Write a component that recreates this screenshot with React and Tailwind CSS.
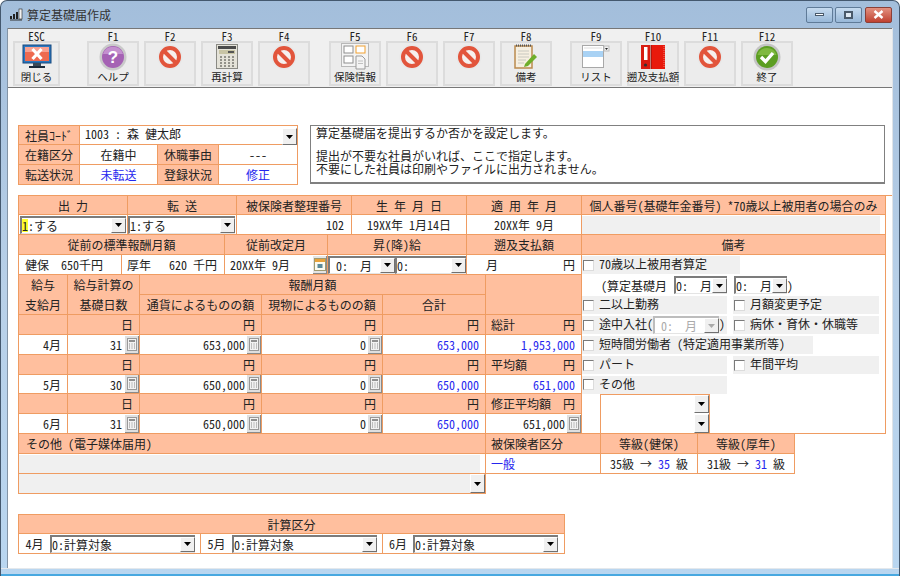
import React from "react";
import clsx from "clsx";
import { twMerge } from "tailwind-merge";

const cx = (...args) => twMerge(clsx(...args));

const font = "[font-family:'Noto_Sans_CJK_JP','Noto_Sans_CJK_SC',sans-serif] [font-feature-settings:'hwid'] text-[12px] leading-[13px] text-[#222222]";
const line = "border-r border-b border-[#ef9c62]";
const peach = "flex items-center justify-center bg-[#ffbf9e] border-r border-b border-[#ef9c62]";
const white = "flex items-center justify-center bg-white border-r border-b border-[#ef9c62]";
const blue = "text-[#2626ee]";

const NoEntry = () => (
  <svg width="26" height="26" viewBox="0 0 26 26">
    <circle cx="13" cy="13" r="12.5" fill="#e8e8e8" />
    <circle cx="13" cy="13" r="9" fill="#f6f0ee" stroke="#e2553c" strokeWidth="4" />
    <path d="M6.5 6.5 L19.5 19.5" stroke="#e2553c" strokeWidth="4" />
  </svg>
);

const Monitor = () => (
  <svg width="30" height="26" viewBox="0 0 30 26">
    <rect x="1" y="1" width="28" height="18" fill="#2a78c0" stroke="#17497e" />
    <rect x="3" y="3" width="24" height="14" fill="#ee6a50" />
    <rect x="3" y="3" width="24" height="5" fill="#f8a090" />
    <path d="M10.5 5 L19.5 15 M19.5 5 L10.5 15" stroke="#ffffff" strokeWidth="3.2" />
    <rect x="11" y="19" width="8" height="3" fill="#3a4a5a" />
    <rect x="7" y="22" width="16" height="2" fill="#1c2a3a" />
  </svg>
);

const Help = () => (
  <svg width="28" height="28" viewBox="0 0 28 28">
    <circle cx="14" cy="14" r="13.5" fill="#c9c9c9" />
    <circle cx="14" cy="14" r="11" fill="#a562b4" />
    <path d="M4 11 A10.5 10.5 0 0 1 24 11 Z" fill="#c490cf" />
    <text x="14" y="20" textAnchor="middle" fontSize="17" fontWeight="700" fill="#ffffff" fontFamily="Liberation Sans">?</text>
  </svg>
);

const Calculator = () => (
  <svg width="22" height="25" viewBox="0 0 22 25">
    <rect x="0.5" y="0.5" width="21" height="24" fill="#e4e2d8" stroke="#8a8a84" />
    <rect x="2" y="2" width="18" height="3" fill="#4a4a4a" />
    <rect x="3" y="6" width="16" height="4" fill="#c8c4a4" />
    <rect x="12" y="7" width="6" height="2" fill="#555555" />
    <path d="M4 13h2M8 13h2M12 13h2M16 13h2M4 16h2M8 16h2M12 16h2M16 16h2M4 19h2M8 19h2M12 19h2M16 19h2M4 22h2M8 22h2M12 22h2M16 22h2" stroke="#77776f" strokeWidth="1.6" />
  </svg>
);

const Insurance = () => (
  <svg width="28" height="27" viewBox="0 0 28 27">
    <rect x="0.5" y="0.5" width="27" height="23" fill="#f4f4f4" stroke="#b8b8b8" />
    <rect x="3" y="3" width="9" height="7" fill="#ffffff" stroke="#8e8e8e" />
    <rect x="15" y="3" width="9" height="7" fill="#ffffff" stroke="#f0a030" />
    <rect x="3" y="13" width="9" height="7" fill="#ffffff" stroke="#8e8e8e" />
    <path d="M15 13h6l3 3v10h-9z" fill="#f4f4f4" stroke="#9a9a9a" />
    <path d="M17 18h5M17 20.5h5" stroke="#c0c0c0" />
  </svg>
);

const Note = () => (
  <svg width="24" height="25" viewBox="0 0 24 25">
    <rect x="1" y="2" width="17" height="22" fill="#f6efe0" stroke="#bb8a4e" strokeWidth="1.5" />
    <path d="M2 1.5h15" stroke="#555555" strokeDasharray="1 1" strokeWidth="2" />
    <path d="M4 7h11M4 10h11M4 13h11M4 16h8M4 19h6" stroke="#c8c8c0" />
    <path d="M11 20 L20 10 L23 13 L14 22 L10 23 Z" fill="#6fae2a" />
  </svg>
);

const ListIcon = () => (
  <svg width="28" height="23" viewBox="0 0 28 23">
    <rect x="0.5" y="0.5" width="21" height="22" fill="#ffffff" stroke="#a8a8a8" />
    <rect x="1" y="6" width="20" height="6" fill="#a9d2f4" />
    <path d="M2 3h18" stroke="#dddddd" />
    <rect x="22" y="1" width="5" height="5" fill="#f2f2f2" stroke="#bbbbbb" />
    <path d="M23 3h3l-1.5 2z" fill="#222222" />
  </svg>
);

const Binder = () => (
  <svg width="24" height="24" viewBox="0 0 24 24">
    <rect x="0" y="0" width="9" height="24" fill="#d81c10" />
    <rect x="10" y="0" width="14" height="24" fill="#e8190c" />
    <path d="M10 0v24" stroke="#8a1008" />
    <rect x="3" y="2" width="3.5" height="13" fill="#ffffff" />
    <circle cx="4.5" cy="20" r="1.6" fill="#333333" />
    <path d="M23 1v22" stroke="#f08070" strokeDasharray="1 1" />
  </svg>
);

const Check = () => (
  <svg width="28" height="28" viewBox="0 0 28 28">
    <circle cx="14" cy="14" r="13.5" fill="#c4c4c4" />
    <circle cx="14" cy="14" r="11" fill="#5c9e22" />
    <path d="M4.5 12 A10 10 0 0 1 23.5 12 Z" fill="#7fb93f" />
    <path d="M8 14 L12.5 18.5 L20 10" fill="none" stroke="#ffffff" strokeWidth="3.4" />
  </svg>
);

const CalcBtn = () => (
  <span className="flex h-[18px] w-[14px] shrink-0 items-center justify-center border-r border-b border-r-[#8a8a8a] border-b-[#8a8a8a] bg-[#dfdfdf]">
    <svg width="10" height="13" viewBox="0 0 10 13">
      <rect x="0.5" y="0.5" width="9" height="12" fill="#f2f2f2" stroke="#999999" />
      <rect x="2" y="2" width="6" height="2" fill="#8f8f8f" />
      <path d="M2 6h1M4.5 6h1M7 6h1M2 8h1M4.5 8h1M7 8h1M2 10h1M4.5 10h1M7 10h1" stroke="#888888" />
    </svg>
  </span>
);

const Calendar = () => (
  <span className="flex h-[18px] w-[14px] shrink-0 items-center justify-center border-r border-b border-r-[#8a8a8a] border-b-[#8a8a8a] bg-[#e4e4e4]">
    <svg width="12" height="13" viewBox="0 0 12 13">
      <rect x="0.5" y="0.5" width="11" height="12" fill="#fbfbf2" stroke="#a09a70" />
      <rect x="1" y="1" width="10" height="3" fill="#e8a23c" />
      <rect x="3.5" y="6" width="5" height="4" fill="#5a8a9a" />
    </svg>
  </span>
);

const Arrow = ({ disabled, className }) => (
  <span
    className={cx(
      "flex w-[15px] shrink-0 items-center justify-center border-t border-l border-r border-b border-t-white border-l-white border-r-[#707070] border-b-[#707070] bg-[#f0f0f0]",
      className
    )}
  >
    <svg width="7" height="4" viewBox="0 0 7 4">
      <path d="M0 0h7L3.5 4z" fill={disabled ? "#aaaaaa" : "#000000"} />
    </svg>
  </span>
);

const Select = ({ value, cursor, disabled, className }) => (
  <div
    className={cx(
      "flex h-[18px] items-stretch border-t-2 border-l-2 border-b border-t-[#7c7c7c] border-l-[#7c7c7c] border-b-[#e4e4e4] bg-white",
      disabled && "text-[#aaaaaa] border-t-[#bdbdbd] border-l-[#bdbdbd]",
      className
    )}
  >
    <span className="flex min-w-0 flex-1 items-center whitespace-pre">
      {cursor ? <span className="bg-[#ffff30]">{cursor}</span> : null}
      {value}
    </span>
    <Arrow disabled={disabled} />
  </div>
);

const Checkbox = () => (
  <span className="mr-[5px] inline-block h-[11px] w-[11px] shrink-0 border border-t-[#7a7a7a] border-l-[#7a7a7a] border-r-[#dcdcdc] border-b-[#dcdcdc] bg-white" />
);

const Option = ({ label, className }) => (
  <div className={cx("flex h-[18px] items-center whitespace-pre bg-[#f0f0f0] pl-[1px]", className)}>
    <Checkbox />
    <span className="pb-[3px]">{label}</span>
  </div>
);

const tools = [
  { key: "ESC", label: "閉じる", icon: <Monitor />, cls: "w-[47px]" },
  { key: "F1", label: "ヘルプ", icon: <Help />, cls: "ml-[22px] w-[52px]" },
  { key: "F2", icon: <NoEntry />, cls: "w-[52px]" },
  { key: "F3", label: "再計算", icon: <Calculator />, cls: "w-[52px]" },
  { key: "F4", icon: <NoEntry />, cls: "w-[52px]" },
  { key: "F5", label: "保険情報", icon: <Insurance />, cls: "ml-[14px] w-[52px]" },
  { key: "F6", icon: <NoEntry />, cls: "w-[52px]" },
  { key: "F7", icon: <NoEntry />, cls: "w-[52px]" },
  { key: "F8", label: "備考", icon: <Note />, cls: "w-[52px]" },
  { key: "F9", label: "リスト", icon: <ListIcon />, cls: "ml-[13px] w-[52px]" },
  { key: "F10", label: "遡及支払額", icon: <Binder />, cls: "w-[52px]" },
  { key: "F11", icon: <NoEntry />, cls: "w-[52px]" },
  { key: "F12", label: "終了", icon: <Check />, cls: "w-[52px]" },
];

const Toolbar = () => (
  <div className="flex h-[60px] gap-[5px] border-t border-b border-[#777777] bg-[#f0f0f0] pl-[5px]">
    {tools.map((t) => (
      <div key={t.key} className={cx("flex flex-col items-center", t.cls)}>
        <div className="flex h-[12px] items-center pt-[2px] text-[11px]">{t.key}</div>
        <div className="flex h-[45px] w-full flex-col items-center border-2 border-[#dcdcdc] bg-[#ececec]">
          <div className="flex h-[27px] shrink-0 items-center justify-center">{t.icon}</div>
          <div className="whitespace-nowrap text-[10.5px]">{t.label}</div>
        </div>
      </div>
    ))}
  </div>
);

const SummaryTable = () => (
  <div className="w-[280px] shrink-0">
    <div className="flex h-[20px] border-t border-[#ef9c62]">
      <div className={cx(peach, "w-[62px] border-l")}>社員ｺｰﾄﾞ</div>
      <div className={cx(line, "flex w-[218px] items-start justify-between bg-white pl-[5px]")}>
        <span className="whitespace-pre pt-[1px]">1003 : 森　健太郎</span>
        <Arrow className="mt-[2px] h-[17px]" />
      </div>
    </div>
    <div className="flex h-[20px]">
      <div className={cx(peach, "w-[62px] border-l")}>在籍区分</div>
      <div className={cx(white, "w-[78px]")}>在籍中</div>
      <div className={cx(peach, "w-[61px]")}>休職事由</div>
      <div className={cx(white, "w-[79px]")}>---</div>
    </div>
    <div className="flex h-[20px]">
      <div className={cx(peach, "w-[62px] border-l")}>転送状況</div>
      <div className={cx(white, blue, "w-[78px]")}>未転送</div>
      <div className={cx(peach, "w-[61px]")}>登録状況</div>
      <div className={cx(white, blue, "w-[79px]")}>修正</div>
    </div>
  </div>
);

const Notice = () => (
  <div className="ml-[12px] h-[59px] w-[575px] border border-b-2 border-[#808080] pl-[5px]">
    <div>算定基礎届を提出するか否かを設定します。</div>
    <div className="mt-[10px]">
      提出が不要な社員がいれば、ここで指定します。
      <br />
      不要にした社員は印刷やファイルに出力されません。
    </div>
  </div>
);

const YenRow = ({ label }) => (
  <div className="flex h-[20px]">
    <div className={cx(peach, "w-[50px] border-l")} />
    <div className={cx(peach, "w-[72px] justify-end pr-[6px]")}>日</div>
    <div className={cx(peach, "w-[122px] justify-end pr-[6px]")}>円</div>
    <div className={cx(peach, "w-[121px] justify-end pr-[6px]")}>円</div>
    <div className={cx(peach, "w-[103px] justify-end pr-[6px]")}>円</div>
    <div className={cx(peach, "w-[96px] justify-between pl-[5px] pr-[6px]")}>
      <span>{label}</span>
      <span>円</span>
    </div>
  </div>
);

const ValueRow = ({ month, days, cash, kind, total, sum, sumBlue, tall, calc }) => (
  <div className={cx("flex", tall ? "h-[20px]" : "h-[19px]")}>
    <div className={cx(white, "w-[50px] justify-end border-l pr-[6px]")}>{month}</div>
    <div className={cx(white, "w-[72px] justify-end")}>
      <span className="pr-[3px]">{days}</span>
      <CalcBtn />
    </div>
    <div className={cx(white, "w-[122px] justify-end")}>
      <span className="pr-[2px]">{cash}</span>
      <CalcBtn />
    </div>
    <div className={cx(white, "w-[121px] justify-end")}>
      <span className="pr-[2px]">{kind}</span>
      <CalcBtn />
    </div>
    <div className={cx(white, blue, "w-[103px] justify-end pr-[6px]")}>{total}</div>
    <div className={cx(white, sumBlue && blue, "w-[96px] justify-end", !calc && "pr-[6px]")}>
      <span className={clsx(calc && "pr-[2px]")}>{sum}</span>
      {calc ? <CalcBtn /> : null}
    </div>
  </div>
);

const RemarksPanel = () => (
  <div className={cx(line, "flex w-[304px] flex-col bg-white")}>
    <div className="flex h-[20px] items-center">
      <Option label="70歳以上被用者算定" className="w-[158px]" />
    </div>
    <div className="flex h-[20px] items-center whitespace-pre pl-[19px]">
      <span>(算定基礎月</span>
      <Select value="0:  月" className="ml-[7px] w-[53px]" />
      <Select value="0:  月" className="ml-[7px] w-[53px]" />
      <span>)</span>
    </div>
    <div className="flex h-[20px] items-center">
      <Option label="二以上勤務" className="w-[145px]" />
      <Option label="月額変更予定" className="ml-[6px] w-[146px]" />
    </div>
    <div className="flex h-[20px] items-center">
      <div className="flex h-[18px] w-[145px] items-center bg-[#f0f0f0] pl-[1px]">
        <Checkbox />
        <span className="pb-[3px]">途中入社(</span>
        <Select value=" 0:  月" disabled className="w-[66px]" />
        <span className="pb-[3px]">)</span>
      </div>
      <Option label="病休・育休・休職等" className="ml-[6px] w-[146px]" />
    </div>
    <div className="flex h-[20px] items-center">
      <Option label="短時間労働者 (特定適用事業所等)" className="w-[231px]" />
    </div>
    <div className="flex h-[20px] items-center">
      <Option label="パート" className="w-[145px]" />
      <Option label="年間平均" className="ml-[6px] w-[146px]" />
    </div>
    <div className="flex h-[19px] items-center">
      <Option label="その他" className="w-[145px]" />
    </div>
    <div className="ml-[18px] flex h-[39px] w-[110px] flex-col items-end border-t border-l border-r border-[#ef9c62] bg-white">
      <Arrow className="h-[18px]" />
      <Arrow className="mt-[1px] h-[19px]" />
    </div>
  </div>
);

const Grid = () => (
  <div className="mt-[10px]">
    <div className="flex h-[20px] border-t border-[#ef9c62]">
      <div className={cx(peach, "w-[110px] border-l")}>出 力</div>
      <div className={cx(peach, "w-[109px]")}>転 送</div>
      <div className={cx(peach, "w-[115px]")}>被保険者整理番号</div>
      <div className={cx(peach, "w-[115px]")}>生 年 月 日</div>
      <div className={cx(peach, "w-[115px]")}>適 用 年 月</div>
      <div className={cx(peach, "w-[304px] whitespace-pre")}>個人番号(基礎年金番号) *70歳以上被用者の場合のみ</div>
    </div>
    <div className="flex h-[20px]">
      <div className={cx(white, "w-[110px] border-l px-[1px]")}>
        <Select value=":する" cursor="1" className="w-full" />
      </div>
      <div className={cx(white, "w-[109px] pr-[1px]")}>
        <Select value="1:する" className="w-full" />
      </div>
      <div className={cx(white, "w-[115px] justify-end pr-[7px]")}>102</div>
      <div className={cx(white, "w-[115px] whitespace-pre")}>19XX年 1月14日</div>
      <div className={cx(white, "w-[115px] whitespace-pre")}>20XX年 9月</div>
      <div className={cx(line, "flex w-[304px] items-center bg-white pr-[5px]")}>
        <div className="h-[18px] w-full bg-[#f0f0f0]" />
      </div>
    </div>
    <div className="flex h-[20px]">
      <div className={cx(peach, "w-[207px] border-l")}>従前の標準報酬月額</div>
      <div className={cx(peach, "w-[103px]")}>従前改定月</div>
      <div className={cx(peach, "w-[139px]")}>昇(降)給</div>
      <div className={cx(peach, "w-[115px]")}>遡及支払額</div>
      <div className={cx(peach, "w-[304px]")}>備考</div>
    </div>
    <div className="flex">
      <div className="w-[564px] shrink-0">
        <div className="flex h-[20px]">
          <div className={cx(white, "w-[104px] justify-start whitespace-pre border-l pl-[6px]")}>健保  650千円</div>
          <div className={cx(white, "w-[103px] justify-start whitespace-pre pl-[5px]")}>厚年   620 千円</div>
          <div className={cx(white, "w-[103px] justify-between whitespace-pre pl-[5px]")}>
            <span>20XX年 9月</span>
            <Calendar />
          </div>
          <div className={cx(line, "flex w-[139px] items-center bg-white")}>
            <Select value=" 0:  月" className="w-[67px]" />
            <Select value="0:" className="w-[71px]" />
          </div>
          <div className={cx(white, "w-[115px] justify-between pl-[19px] pr-[6px]")}>
            <span>月</span>
            <span>円</span>
          </div>
        </div>
        <div className="flex">
          <div className={cx(peach, "h-[40px] w-[50px] flex-col gap-[7px] border-l")}>
            <span>給与</span>
            <span>支給月</span>
          </div>
          <div className={cx(peach, "h-[40px] w-[72px] flex-col gap-[7px]")}>
            <span>給与計算の</span>
            <span>基礎日数</span>
          </div>
          <div className="w-[346px]">
            <div className={cx(peach, "h-[20px]")}>報酬月額</div>
            <div className="flex h-[20px]">
              <div className={cx(peach, "w-[122px]")}>通貨によるものの額</div>
              <div className={cx(peach, "w-[121px]")}>現物によるものの額</div>
              <div className={cx(peach, "w-[103px]")}>合計</div>
            </div>
          </div>
          <div className={cx(peach, "h-[40px] w-[96px]")} />
        </div>
        <YenRow label="総計" />
        <ValueRow tall month="4月" days="31" cash="653,000" kind="0" total="653,000" sum="1,953,000" sumBlue />
        <YenRow label="平均額" />
        <ValueRow month="5月" days="30" cash="650,000" kind="0" total="650,000" sum="651,000" sumBlue />
        <YenRow label="修正平均額" />
        <ValueRow tall calc month="6月" days="31" cash="650,000" kind="0" total="650,000" sum="651,000" />
      </div>
      <RemarksPanel />
    </div>
    <div className="flex">
      <div className="w-[468px] shrink-0">
        <div className={cx(peach, "h-[20px] justify-start whitespace-pre border-l pl-[7px]")}>その他 (電子媒体届用)</div>
        <div className={cx(line, "flex h-[20px] items-center border-l bg-white pr-[5px]")}>
          <div className="h-[18px] w-full bg-[#f0f0f0]" />
        </div>
        <div className={cx(line, "flex h-[20px] items-stretch border-l bg-[#f0f0f0]")}>
          <div className="flex-1" />
          <Arrow />
        </div>
      </div>
      <div className="w-[310px]">
        <div className="flex h-[20px]">
          <div className={cx(peach, "w-[115px] justify-start pl-[5px]")}>被保険者区分</div>
          <div className={cx(peach, "w-[97px]")}>等級(健保)</div>
          <div className={cx(peach, "w-[97px]")}>等級(厚年)</div>
        </div>
        <div className="flex h-[20px]">
          <div className={cx(white, blue, "w-[115px] justify-start pl-[5px]")}>一般</div>
          <div className={cx(white, "w-[97px] whitespace-pre")}>
            35級 → <span className={blue}>35</span> 級
          </div>
          <div className={cx(white, "w-[97px] whitespace-pre")}>
            31級 → <span className={blue}>31</span> 級
          </div>
        </div>
      </div>
    </div>
  </div>
);

const CalcSection = () => (
  <div className="mt-[20px] w-[547px]">
    <div className={cx(peach, "h-[20px] border-t border-l")}>計算区分</div>
    <div className="flex h-[20px]">
      <div className={cx(line, "flex w-[183px] items-center border-l bg-white")}>
        <span className="w-[31px] shrink-0 text-center">4月</span>
        <Select value="0:計算対象" className="w-[145px]" />
      </div>
      <div className={cx(line, "flex w-[182px] items-center bg-white")}>
        <span className="w-[31px] shrink-0 text-center">5月</span>
        <Select value="0:計算対象" className="w-[145px]" />
      </div>
      <div className={cx(line, "flex w-[182px] items-center bg-white")}>
        <span className="w-[30px] shrink-0 text-center">6月</span>
        <Select value="0:計算対象" className="w-[145px]" />
      </div>
    </div>
  </div>
);

const WinBtn = ({ className, children }) => (
  <div className={cx("flex h-[16px] items-center justify-center rounded-[2px] border border-[#5f7b98]", className)}>{children}</div>
);

export default function App() {
  return (
    <div className={cx(font, "h-[576px] w-[900px] overflow-hidden bg-white")}>
      <div className="flex h-full flex-col overflow-hidden rounded-t-[7px] border border-b-0 border-[#44586e] bg-gradient-to-b from-[#a3bedb] via-[#b8d0e8] to-[#b9d6f0]">
        <div className="flex h-[27px] shrink-0 items-center pl-[8px] pr-[7px]">
          <svg width="14" height="13" viewBox="0 0 14 13" className="mr-[4px]">
            <path d="M1 12h12" stroke="#333333" />
            <rect x="1" y="8" width="2" height="3" fill="#222222" />
            <rect x="4" y="6" width="2" height="5" fill="#222222" />
            <rect x="7" y="4" width="2" height="7" fill="#222222" />
            <rect x="10" y="1" width="3" height="10" fill="#f2f2f2" stroke="#222222" strokeWidth="0.6" />
          </svg>
          <span className="text-[#333333]">算定基礎届作成</span>
          <div className="ml-auto flex gap-[2px]">
            <WinBtn className="w-[27px] bg-gradient-to-b from-[#c6dbef] to-[#98b8d8]">
              <span className="h-[3px] w-[9px] border border-[#4a5a6a] bg-white" />
            </WinBtn>
            <WinBtn className="w-[27px] bg-gradient-to-b from-[#c6dbef] to-[#98b8d8]">
              <span className="h-[8px] w-[9px] border-2 border-[#4a5a6a] bg-[#dfe9f2]" />
            </WinBtn>
            <WinBtn className="ml-[1px] w-[27px] border-[#8a4038] bg-gradient-to-b from-[#e29080] to-[#bf4030]">
              <svg width="11" height="9" viewBox="0 0 11 9">
                <path d="M1.5 1 L9.5 8 M9.5 1 L1.5 8" stroke="#ffffff" strokeWidth="2.4" />
              </svg>
            </WinBtn>
          </div>
        </div>
        <div className="ml-[6px] mr-[6px] h-[540px] shrink-0 border-l border-r border-l-[#8394a6] border-r-[#dfe3e7] bg-white">
          <Toolbar />
          <div className="pl-[10px] pt-[37px]">
            <div className="flex">
              <SummaryTable />
              <Notice />
            </div>
            <Grid />
            <CalcSection />
          </div>
        </div>
        <div className="flex-1 border-t border-b-2 border-t-[#e4e8ec] border-b-[#48a8e0]" />
      </div>
    </div>
  );
}
